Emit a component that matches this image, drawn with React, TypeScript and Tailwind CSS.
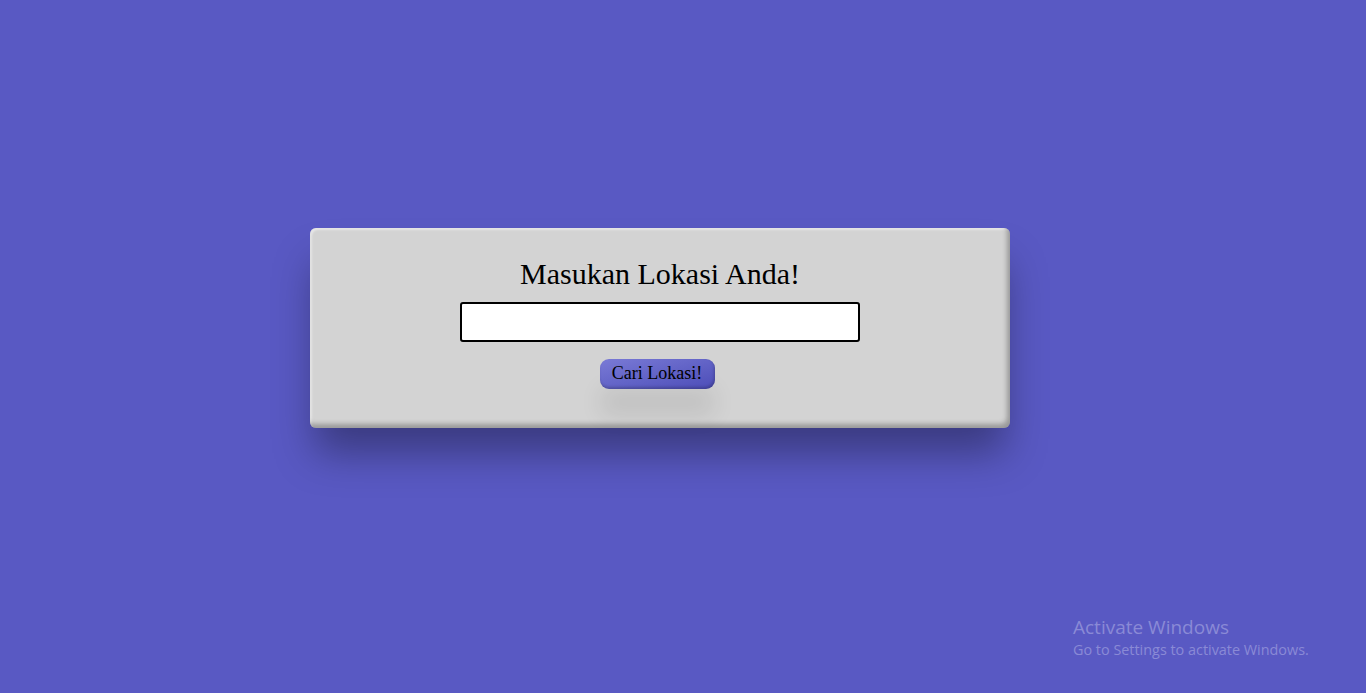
import React, { useState } from 'react';

const App: React.FC = () => {
  const [lokasi, setLokasi] = useState('');

  return (
    <div className="relative min-h-screen w-full bg-[#5959c3] flex items-center justify-center pr-[46px] pb-[38px] font-['Liberation_Serif',serif]">
      <div className="w-[700px] h-[200px] rounded-[6px] bg-[#d3d3d3] flex flex-col items-center pt-[28px] shadow-[0_30px_40px_-5px_rgba(0,0,0,0.35),inset_-3px_-4px_5px_rgba(0,0,0,0.28),inset_2px_2px_2px_rgba(255,255,255,0.45)]">
        <h1 className="text-[30px] leading-[36px] text-black">Masukan Lokasi Anda!</h1>
        <input
          type="text"
          value={lokasi}
          onChange={(e) => setLokasi(e.target.value)}
          className="mt-[10px] w-[400px] h-[40px] bg-white border-2 border-black rounded-[3px] px-2 outline-none"
        />
        <button
          onClick={() => setLokasi(lokasi.trim())}
          className="mt-[17px] mr-[6px] w-[115px] h-[30px] rounded-[9px] text-[18px] text-black bg-gradient-to-br from-[#7a7ad6] to-[#4d4db8] shadow-[0_28px_22px_rgba(0,0,0,0.08),inset_-1px_-2px_3px_rgba(0,0,0,0.2)]"
        >
          Cari Lokasi!
        </button>
      </div>

      {/* windows watermark */}
      <div className="absolute left-[1073px] top-[618px] font-['Open_Sans',sans-serif] text-[#8a8ad6] leading-none">
        <div className="text-[19px]">Activate Windows</div>
        <div className="text-[14.4px] mt-[6px]">Go to Settings to activate Windows.</div>
      </div>
    </div>
  );
};

export default App;
